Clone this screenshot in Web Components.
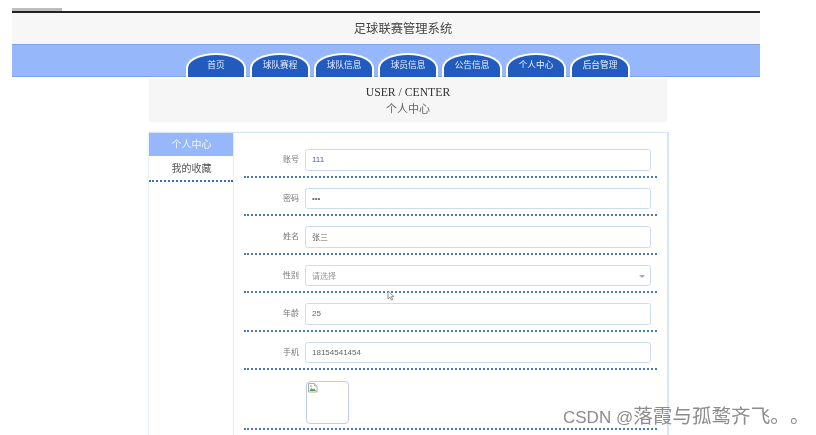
<!DOCTYPE html>
<html lang="zh"><head><meta charset="utf-8"><title>足球联赛管理系统</title>
<style>
html,body{margin:0;padding:0;background:#fff;height:435px;overflow:hidden}
body{font-family:"Liberation Sans","Noto Sans CJK SC",sans-serif;position:relative}
#page{filter:blur(.45px);height:435px;overflow:hidden}
</style></head><body>
<div id="page">
<site-header title="足球联赛管理系统"></site-header>
<site-nav>
  <nav-tab>首页</nav-tab><nav-tab>球队赛程</nav-tab><nav-tab>球队信息</nav-tab><nav-tab>球员信息</nav-tab><nav-tab>公告信息</nav-tab><nav-tab>个人中心</nav-tab><nav-tab>后台管理</nav-tab>
</site-nav>
<page-banner en="USER / CENTER" zh="个人中心"></page-banner>
<center-panel>
  <side-item slot="side" active>个人中心</side-item>
  <side-item slot="side" dotted>我的收藏</side-item>
  <form-row label="账号"><fake-input>111</fake-input></form-row>
  <form-row label="密码"><fake-input>•••</fake-input></form-row>
  <form-row label="姓名"><fake-input>张三</fake-input></form-row>
  <form-row label="性别"><fake-input select muted>请选择</fake-input></form-row>
  <form-row label="年龄"><fake-input>25</fake-input></form-row>
  <form-row label="手机"><fake-input>18154541454</fake-input></form-row>
  <form-row pic><broken-pic></broken-pic></form-row>
</center-panel>
</div>
<mouse-cursor></mouse-cursor>
<water-mark>CSDN @<span slot="cjk">落霞与孤鹜齐飞。。</span></water-mark>
<script>
const def=(name,css,html)=>customElements.define(name,class extends HTMLElement{
  connectedCallback(){
    if(this.shadowRoot)return;
    const r=this.attachShadow({mode:'open'});
    r.innerHTML=`<style>${css}</style>${typeof html==='function'?html(this):html}`;
  }
});
def('site-header',`
:host{display:block;margin:0 56px 0 12px;padding-top:8px}
.tick{width:50px;height:3px;background:#bdbdbd}
.line{height:2px;background:#222}
.t{height:31px;background:#f7f7f7;display:flex;align-items:center;justify-content:center;font-size:12.3px;color:#444;padding:0 0 2px 34px;box-sizing:border-box}
`,h=>`<div class="tick"></div><div class="line"></div><div class="t">${h.getAttribute('title')}</div>`);
def('site-nav',`
:host{display:flex;justify-content:flex-start;gap:4px;box-sizing:border-box;height:33px;margin:0 56px 0 12px;padding:8px 0 0 174px;background:#96b8fb;border-top:1px solid #7ea3ea;border-bottom:1px solid #7ea3ea}
`,`<slot></slot>`);
def('nav-tab',`
:host{display:flex;align-items:center;justify-content:center;box-sizing:border-box;width:60px;height:24px;padding-bottom:3px;background:#205bbd;color:#e8effb;font-size:8.7px;border:2px solid #fff;border-bottom:0;border-radius:50% 50% 0 0/62% 62% 0 0}
`,`<slot></slot>`);
def('page-banner',`
:host{display:block;box-sizing:border-box;width:518px;height:43px;margin:2px 0 0 149px;background:#f6f6f6;text-align:center;padding-top:7px;color:#444;font-family:"Liberation Serif","Noto Sans CJK SC",serif}
.en{font-size:11.7px;line-height:14px;color:#333}
.zh{font-size:11px;line-height:18px;color:#666}
`,h=>`<div class="en">${h.getAttribute('en')}</div><div class="zh">${h.getAttribute('zh')}</div>`);
def('center-panel',`
:host{display:flex;box-sizing:border-box;width:518px;height:310px;margin:11px 0 0 149px;box-shadow:1px 0 0 1px #d8e4fb,-1px 0 2px #e4ecfc,0 -1px 2px #e8effc}
aside{width:84px;border-right:1px solid #e6eefc;flex:none;box-sizing:content-box}
main{flex:1;padding:16px 10px 0 10px;min-width:0}
`,`<aside><slot name="side"></slot></aside><main><slot></slot></main>`);
def('side-item',`
:host{display:flex;align-items:center;justify-content:center;box-sizing:border-box;height:23px;padding:0 0 2px 1px;font-size:10px;color:#555;margin-bottom:1px}
:host([active]){background:#96b8fb;color:#f2f6ff}
:host([dotted]){height:25px;border-bottom:2px dotted #3c6cc0;margin-bottom:0}
`,`<slot></slot>`);
def('form-row',`
:host{display:flex;box-sizing:border-box;height:28.5px;padding-bottom:5px;margin-bottom:10px;border-bottom:2px dotted #4a78c8}
:host([pic]){height:50px}
.l{width:55px;flex:none;text-align:right;font-size:8px;color:#777;line-height:21px}
.c{flex:1;margin-left:6px;margin-right:6px;min-width:0}
`,h=>`<div class="l">${h.getAttribute('label')||''}</div><div class="c"><slot></slot></div>`);
def('fake-input',`
:host{display:flex;align-items:center;box-sizing:border-box;height:21.5px;border:1px solid #ccdaf2;border-radius:2.5px;padding:0 6px;font-size:8px;color:#666;background:#fff;position:relative}
:host([muted]){color:#999}
i{position:absolute;right:5px;top:9px;border:3px solid transparent;border-top:3px solid #aaa;border-bottom:0}
`,h=>`<slot></slot>${h.hasAttribute('select')?'<i></i>':''}`);
def('broken-pic',`
:host{display:block;box-sizing:border-box;width:43px;height:43px;margin:.5px 0 0 .5px;border:1px solid #bfcde6;border-radius:4px;background:#fff;padding:1px}
svg{display:block}
`,`<svg width="10" height="10" viewBox="0 0 10 10"><path d="M.5.5h6l2.500 2.500v6h-8.500z" fill="#fff" stroke="#9a9a9a" stroke-width=".8"/><path d="M6.500.5v2.500h2.500" fill="#ddd" stroke="#9a9a9a" stroke-width=".6"/><path d="M1.500 8l2-3 1.500 1.500 1-1 2 2.500z" fill="#4aa54a"/><circle cx="3" cy="3" r="1" fill="#9cc3f0"/></svg>`);
def('mouse-cursor',`
:host{position:absolute;left:387px;top:290px;display:block;width:8px;height:12px;filter:blur(.3px)}
svg{display:block}
`,`<svg width="8" height="12" viewBox="0 0 8 12"><path d="M1 1v8l2-1.800 1.500 3 1.300-.6-1.500-3h2.600z" fill="#fff" stroke="#777" stroke-width=".8"/></svg>`);
def('water-mark',`
:host{position:absolute;left:563px;top:405px;display:block;font:17px/22px "Liberation Sans","Noto Sans CJK SC",sans-serif;color:#8c8c8c;white-space:nowrap}
.c{font-size:19.6px;text-spacing-trim:space-all}
`,`<slot></slot><span class="c"><slot name="cjk"></slot></span>`);
</script>
</body></html>
